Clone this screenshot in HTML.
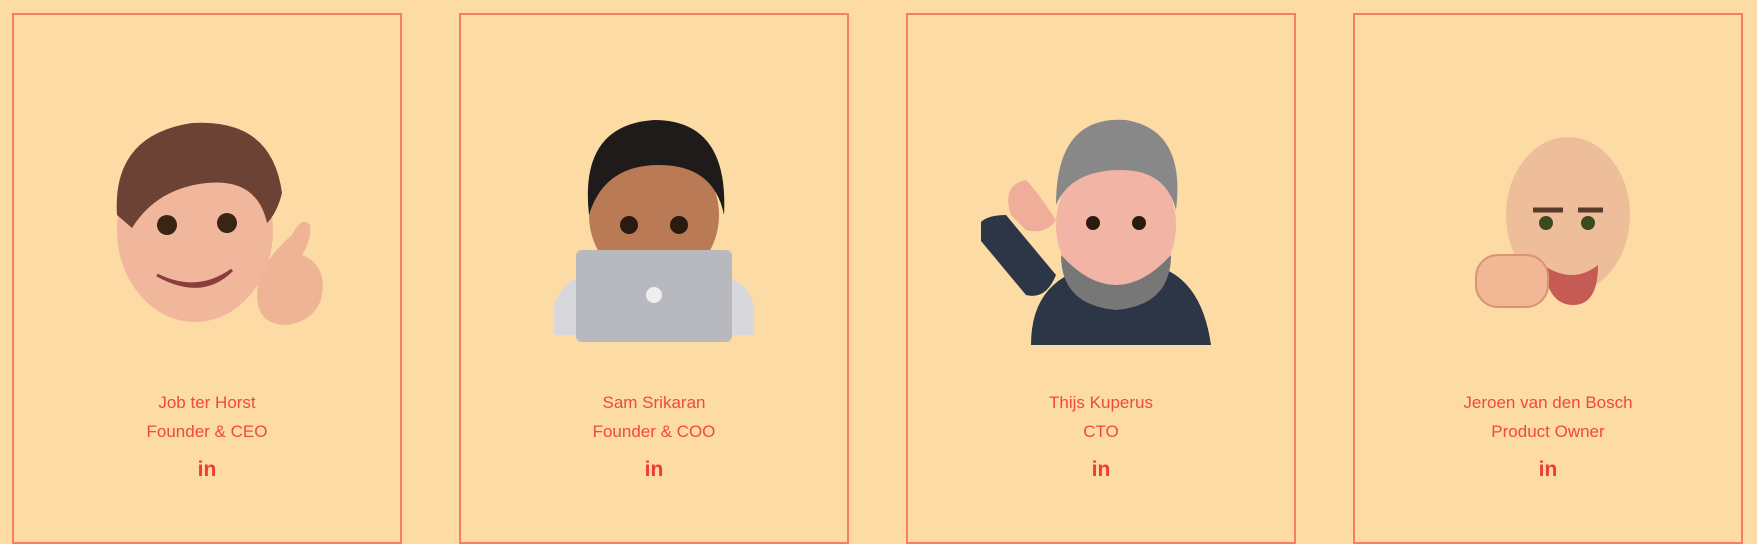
<!DOCTYPE html>
<html><head><style>
body{margin:0;width:1757px;height:544px;background:#fddba4;position:relative;overflow:hidden;font-family:"Liberation Sans",sans-serif}
.c{position:absolute;top:13px;width:386px;height:527px;border:2px solid #f97d62;box-sizing:content-box}
.t{position:absolute;top:373px;left:0;right:0;text-align:center;color:#ef4a3c;font-size:17px;line-height:29px}
.in{position:absolute;top:443px;left:0;right:0;text-align:center;color:#ef3b33;font-weight:bold;font-size:21px}
svg{position:absolute;left:73px;top:90px}
</style></head><body>
<div class="c" style="left:12px">
<svg width="240" height="250" viewBox="0 0 240 250">
<path d="M205 130 q10 -20 18 -10 q2 14 -8 30 q25 10 20 40 q-5 25 -35 30 q-30 0 -30 -30 q0 -30 35 -60z" fill="#efb496"/>
<ellipse cx="108" cy="125" rx="78" ry="92" fill="#f0b79c"/>
<path d="M30 110 q-5 -80 75 -92 q80 -5 90 70 q-5 20 -15 30 q-10 -45 -60 -40 q-50 5 -75 45z" fill="#6b4234"/>
<circle cx="80" cy="120" r="10" fill="#3a2414"/><circle cx="140" cy="118" r="10" fill="#3a2414"/>
<path d="M70 170 q40 20 75 -5 q-30 30 -75 5z" fill="#fff" stroke="#8a3d3a" stroke-width="3"/>
</svg>
<div class="t">Job ter Horst<br>Founder &amp; CEO</div><div class="in">in</div></div>
<div class="c" style="left:459px">
<svg width="240" height="250" viewBox="0 0 240 250">
<ellipse cx="120" cy="110" rx="65" ry="70" fill="#b97a55"/>
<path d="M55 110 q-10 -90 65 -95 q75 0 70 95 q-10 -50 -65 -50 q-55 0 -70 50z" fill="#1f1b1b"/>
<circle cx="95" cy="120" r="9" fill="#2a1a10"/><circle cx="145" cy="120" r="9" fill="#2a1a10"/>
<path d="M20 200 q10 -30 40 -30 h120 q30 0 40 30 v30 h-200z" fill="#d8d8dc"/>
<rect x="42" y="145" width="156" height="92" rx="6" fill="#b8b9bf"/>
<circle cx="120" cy="190" r="8" fill="#eee"/>
</svg>
<div class="t">Sam Srikaran<br>Founder &amp; COO</div><div class="in">in</div></div>
<div class="c" style="left:906px">
<svg width="240" height="260" viewBox="0 0 240 260">
<path d="M50 240 q0 -70 70 -80 h50 q50 10 60 80z M-5 130 q0 -20 30 -20 l50 60 q-10 25 -30 20z" fill="#2c3647"/>
<path d="M30 110 q-10 -30 15 -35 q10 10 30 40 q-10 15 -30 10z" fill="#f0ae9a"/>
<ellipse cx="135" cy="120" rx="60" ry="70" fill="#f2b4a4"/>
<path d="M80 150 q55 60 110 0 q0 50 -55 55 q-55 -5 -55 -55z" fill="#777"/>
<path d="M75 100 q0 -90 70 -85 q60 10 50 90 q-10 -40 -55 -40 q-50 0 -65 35z" fill="#888"/>
<circle cx="112" cy="118" r="7" fill="#2a1a10"/><circle cx="158" cy="118" r="7" fill="#2a1a10"/>
</svg>
<div class="t">Thijs Kuperus<br>CTO</div><div class="in">in</div></div>
<div class="c" style="left:1353px">
<svg width="240" height="260" viewBox="0 0 240 260">
<ellipse cx="140" cy="110" rx="62" ry="78" fill="#eebd9a"/>
<path d="M115 160 q30 20 55 0 q0 40 -25 40 q-25 0 -30 -40z" fill="#c65a55"/>
<circle cx="118" cy="118" r="7" fill="#3c4a20"/><circle cx="160" cy="118" r="7" fill="#3c4a20"/>
<path d="M105 105 h30 M150 105 h25" stroke="#5a3c2c" stroke-width="5"/>
<rect x="48" y="150" width="72" height="52" rx="22" fill="#f2b794" stroke="#d99474" stroke-width="2"/>
</svg>
<div class="t">Jeroen van den Bosch<br>Product Owner</div><div class="in">in</div></div>
</body></html>
